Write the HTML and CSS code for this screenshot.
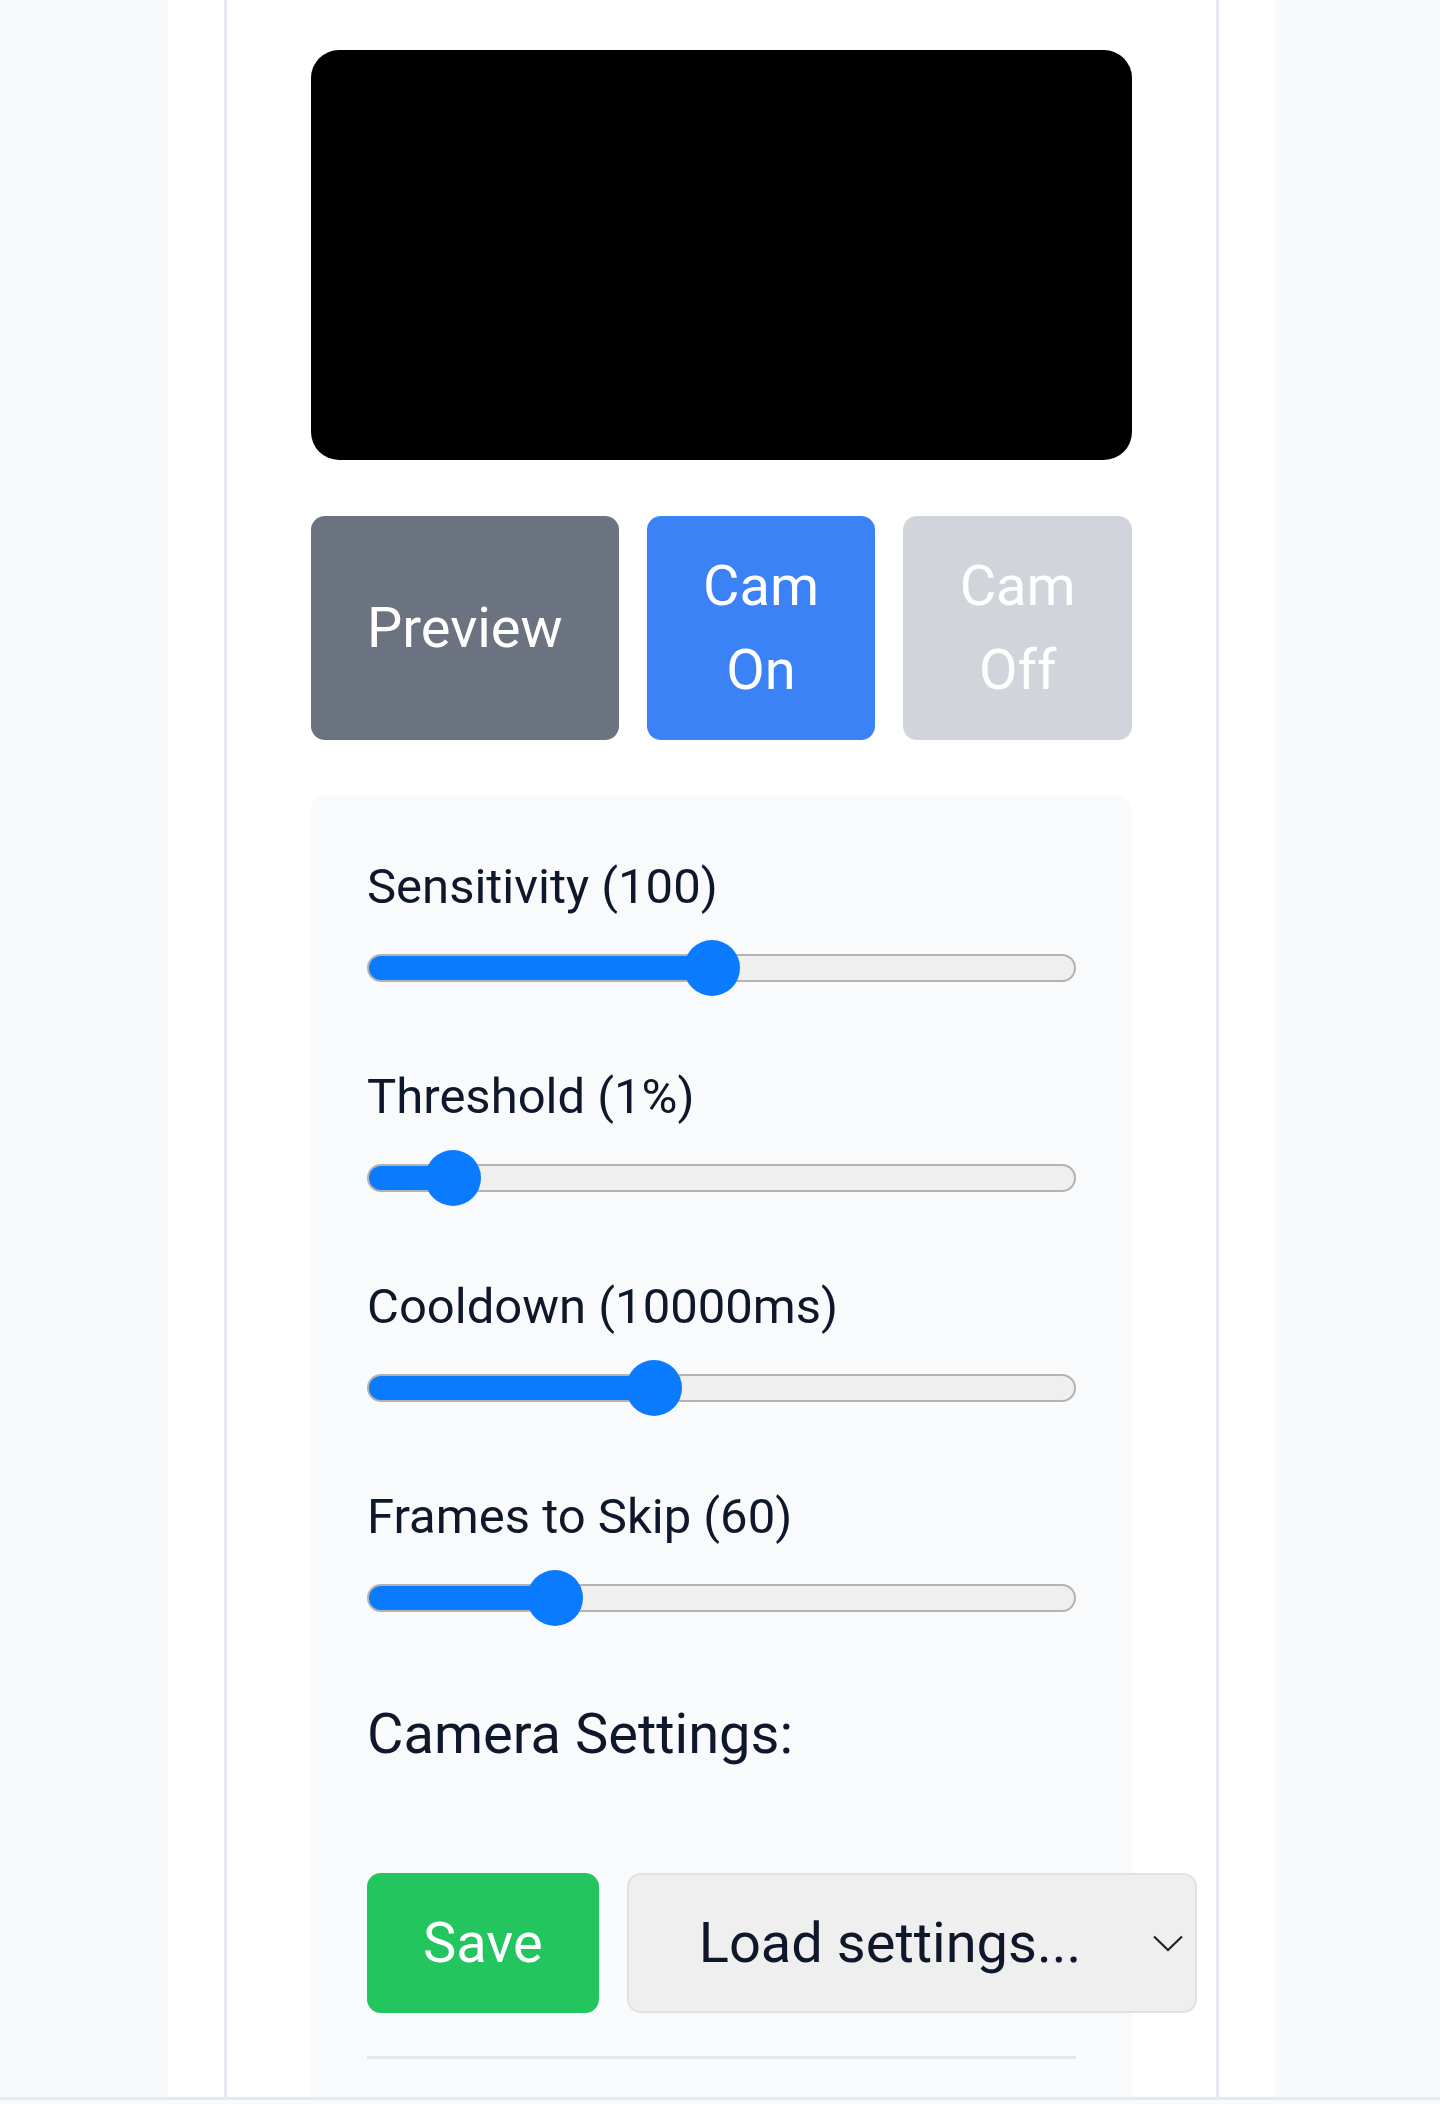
FILE: index.html
```html
<!DOCTYPE html>
<html lang="en">
<head>
<meta charset="utf-8">
<title>Motion Camera</title>
<link rel="stylesheet" href="styles.css">
</head>
<body>
<main class="page">
  <div class="frame">
    <div class="video"></div>

    <div class="cam-buttons">
      <button class="btn btn-gray">Preview</button>
      <button class="btn btn-blue">Cam On</button>
      <button class="btn btn-light">Cam Off</button>
    </div>

    <section class="panel">
      <div class="field">
        <label class="field-label">Sensitivity (100)</label>
        <input class="slider" type="range" min="5" max="201" value="100" style="--p:342px">
      </div>
      <div class="field">
        <label class="field-label">Threshold (1%)</label>
        <input class="slider" type="range" min="0" max="11.6" step="any" value="1" style="--p:84px">
      </div>
      <div class="field">
        <label class="field-label">Cooldown (10000ms)</label>
        <input class="slider" type="range" min="0" max="25300" value="10000" style="--p:284px">
      </div>
      <div class="field">
        <label class="field-label">Frames to Skip (60)</label>
        <input class="slider" type="range" min="0" max="246" value="60" style="--p:186px">
      </div>

      <h3 class="settings-title">Camera Settings:</h3>

      <div class="settings-row">
        <button class="btn btn-green">Save</button>
        <div class="select-wrap">
          <select class="select">
            <option>Load settings...</option>
          </select>
          <svg class="chevron" width="30" height="17" viewBox="0 0 30 17" aria-hidden="true">
            <path d="M1 1.5 L15 15 L29 1.5" fill="none" stroke="#1f2328" stroke-width="2.2"/>
          </svg>
        </div>
      </div>

      <hr class="divider">
    </section>
  </div>
</main>
<footer class="footer"></footer>
</body>
</html>
```

FILE: styles.css
```css
* { box-sizing: border-box; }

html, body {
  margin: 0;
  padding: 0;
}

body {
  background: #f8f9fb;
  font-family: Roboto, "Noto Sans", "Liberation Sans", sans-serif;
  color: #0f172a;
}

.page {
  width: 1107px;
  margin: 0 0 0 168px;
  background: #ffffff;
  padding: 0 56px;
}

.frame {
  border-left: 3px solid #e3e8f0;
  border-right: 3px solid #e3e8f0;
  padding: 50px 84px 0;
}

.video {
  background: #000;
  height: 410px;
  border-radius: 28px;
}

.cam-buttons {
  display: flex;
  gap: 28px;
  margin-top: 56px;
}

.btn {
  border: none;
  font-family: inherit;
  font-size: 56px;
  line-height: 84px;
  padding: 28px 56px;
  border-radius: 14px;
  color: #ffffff;
  text-align: center;
}

.cam-buttons .btn {
  flex: 1 1 0;
}

.btn-gray { background: #6b7280; }
.btn-blue { background: #3b82f6; }
.btn-light { background: #d1d5db; }
.btn-green { background: #22c55e; flex: none; }

.panel {
  margin-top: 56px;
  background: #f8fafc;
  border-radius: 14px 14px 0 0;
  padding: 56px 56px 38px;
}

.field {
  margin-bottom: 66px;
}

.field-label {
  display: block;
  font-size: 49px;
  line-height: 64px;
  padding-top: 3px;
  margin-bottom: 21px;
  color: #0f172a;
}

.slider {
  -webkit-appearance: none;
  appearance: none;
  display: block;
  width: 100%;
  height: 56px;
  margin: 0;
  background: transparent;
}

.slider::-webkit-slider-runnable-track {
  height: 28px;
  border-radius: 14px;
  border: 2px solid #b3b3b3;
  background: linear-gradient(to right, #0a7aff var(--p), #efefef var(--p));
}

.slider::-webkit-slider-thumb {
  -webkit-appearance: none;
  appearance: none;
  width: 56px;
  height: 56px;
  border-radius: 50%;
  background: #0a7aff;
  border: none;
  margin-top: -16px;
}

.settings-title {
  margin: 0 0 97px;
  font-size: 56px;
  line-height: 84px;
  font-weight: 400;
  color: #0f172a;
}

.settings-row {
  display: flex;
  gap: 28px;
}

.select-wrap {
  position: relative;
  flex: none;
  width: 570px;
}

.select {
  -webkit-appearance: none;
  appearance: none;
  width: 100%;
  height: 100%;
  background: #efefef;
  border: 2px solid #dfe1e5;
  border-radius: 14px;
  font-family: inherit;
  font-size: 56px;
  color: #0f172a;
  padding: 0 0 0 70px;
}

.chevron {
  position: absolute;
  right: 14px;
  top: 50%;
  margin-top: -8px;
  pointer-events: none;
}

.divider {
  margin: 43px 0 0;
  border: none;
  border-top: 3px solid #e2e8f0;
}

.footer {
  border-top: 3px solid #e5e9f0;
  height: 20px;
  background: #f8f9fb;
}
```
